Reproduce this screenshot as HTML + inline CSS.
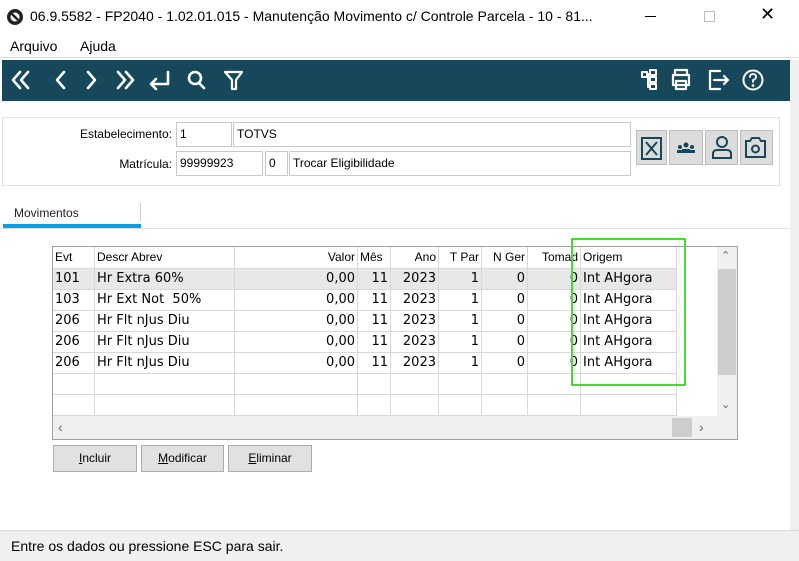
<!DOCTYPE html>
<html><head><meta charset="utf-8"><style>
*{box-sizing:border-box;margin:0;padding:0}
body{width:799px;height:561px;overflow:hidden;background:#fff;font-family:"Liberation Sans",sans-serif;position:relative;color:#000}
.a{position:absolute}
.inp{position:absolute;border:1px solid #c8c8c8;background:#fff;font-size:12px;padding:3px 3px;height:25px;line-height:17px}
.lbl{position:absolute;font-size:12px;text-align:right}
.ib{position:absolute;top:130px;height:35px;background:#dcdcdc;border:1px solid #bdbdbd}
.row{position:absolute;left:53px;width:624px;height:21px;border-bottom:1px solid #d8d8d8;font-size:13px;font-family:"DejaVu Sans",sans-serif}
.c{position:absolute;top:0;height:21px;line-height:20px;border-right:1px solid #d8d8d8;padding:0 2px;white-space:nowrap}
.r{text-align:right}
.h{font-family:"Liberation Sans",sans-serif;font-size:12px}
.btn{position:absolute;top:445px;height:27px;background:#e1e1e1;border:1px solid #adadad;font-size:12px;text-align:center;line-height:25px}
</style></head><body>
<svg class="a" style="left:6px;top:8px" width="18" height="18" viewBox="0 0 18 18"><circle cx="9" cy="9" r="8" fill="#222"/><circle cx="9" cy="9" r="4.5" fill="#fff"/><path d="M5 5 L12 12" stroke="#222" stroke-width="2.5"/></svg>
<div class="a" style="left:30px;top:8px;font-size:14px">06.9.5582 - FP2040 - 1.02.01.015 - Manutenção Movimento c/ Controle Parcela - 10 - 81...</div>
<div class="a" style="left:645px;top:16px;width:11px;height:1px;background:#000"></div>
<div class="a" style="left:704px;top:11px;width:11px;height:11px;border:1px solid #bbb"></div>
<div class="a" style="left:760px;top:4px;font-size:18px">✕</div>
<div class="a" style="left:10px;top:38px;font-size:14px">Arquivo</div>
<div class="a" style="left:80px;top:38px;font-size:14px">Ajuda</div>
<div class="a" style="left:0;top:57px;width:799px;height:1px;background:#ddd"></div>
<div class="a" style="left:2px;top:60px;width:788px;height:41px;background:#17475a"></div>
<svg class="a" style="left:8px;top:64px" width="780" height="32" fill="none" stroke="#fff" stroke-width="2.6" stroke-linecap="round" stroke-linejoin="round">
<path d="M12 8 L5 16 L12 24 M20 8 L13 16 L20 24"/>
<path d="M56 8 L49 16 L56 24"/>
<path d="M80 8 L87 16 L80 24"/>
<path d="M110 8 L117 16 L110 24 M118 8 L125 16 L118 24"/>
<path d="M160 8 V20 H144 M148 15 L143 20 L148 25"/>
<circle cx="187" cy="14" r="6"/><path d="M191 19 L196 24"/>
<path d="M217 8 H234 L228 16 V25 H224 V16 Z" stroke-width="2.2"/>
<g stroke-width="2"><rect x="634" y="8" width="5" height="5"/><rect x="642" y="6" width="6" height="5"/><rect x="642" y="13" width="6" height="5"/><rect x="642" y="20" width="6" height="5"/><path d="M639 10 H642 M640 10 V23 H642"/></g>
<path d="M667 11 V6 H679 V11 M665 11 H681 V21 H665 Z M668 17 H678 V25 H668 Z" stroke-width="2.2"/>
<path d="M712 7 H702 V25 H712 M706 16 H720 M716 12 L720 16 L716 20" stroke-width="2.2"/>
<circle cx="745" cy="16" r="9.5" stroke-width="2"/><path d="M742 13 Q742 10 745 10 Q748 10 748 13 Q748 15 745 16 V18" stroke-width="1.8"/><circle cx="745" cy="21.5" r=".6" stroke-width="1.5"/>
</svg>
<div class="a" style="left:790px;top:60px;width:9px;height:470px;background:#f0f0f0"></div>
<div class="a" style="left:2px;top:117px;width:778px;height:69px;border:1px solid #e2e2e2;background:#fff"></div>
<div class="lbl" style="left:20px;width:152px;top:127px">Estabelecimento:</div>
<div class="inp" style="left:176px;top:122px;width:56px">1</div>
<div class="inp" style="left:233px;top:122px;width:398px">TOTVS</div>
<div class="lbl" style="left:20px;width:152px;top:157px">Matrícula:</div>
<div class="inp" style="left:176px;top:151px;width:87px">99999923</div>
<div class="inp" style="left:265px;top:151px;width:23px">0</div>
<div class="inp" style="left:289px;top:151px;width:342px">Trocar Eligibilidade</div>
<div class="ib" style="left:636px;width:31px"></div>
<div class="ib" style="left:669px;width:34px"></div>
<div class="ib" style="left:705px;width:33px"></div>
<div class="ib" style="left:740px;width:33px"></div>
<svg class="a" style="left:636px;top:130px" width="138" height="35" fill="none" stroke="#17475a" stroke-width="2">
<rect x="6" y="8" width="19" height="21"/><path d="M10 12 L21 25 M21 12 L10 25"/>
<g fill="#17475a" stroke="none"><circle cx="50" cy="15" r="2.5"/><circle cx="44" cy="17" r="2"/><circle cx="56" cy="17" r="2"/><rect x="46" y="19" width="8" height="4"/><rect x="41" y="20" width="5" height="3"/><rect x="54" y="20" width="5" height="3"/></g>
<circle cx="86" cy="12" r="5"/><path d="M77 28 V24 Q77 20 81 20 H91 Q95 20 95 24 V28 Z"/>
<path d="M110 11 H114 L116 8 H123 L125 11 H129 V27 H110 Z"/><circle cx="119.5" cy="19" r="3.5"/>
</svg>
<div class="a" style="left:14px;top:206px;font-size:12px;color:#222">Movimentos</div>
<div class="a" style="left:140px;top:203px;width:1px;height:18px;background:#ccc"></div>
<div class="a" style="left:3px;top:224px;width:138px;height:4px;background:#0a9ee6"></div>
<div class="a" style="left:0;top:228px;width:790px;height:1px;background:#e0e0e0"></div>
<div class="a" style="left:52px;top:246px;width:686px;height:194px;border:1px solid #a0a0a0;background:#fff"></div>
<div class="a" style="left:717px;top:247px;width:20px;height:169px;background:#f0f0f0"></div>
<div class="a" style="left:718px;top:269px;width:18px;height:106px;background:#cdcdcd"></div>
<div class="a" style="left:721px;top:249px;font-size:11px;color:#666">⌃</div>
<div class="a" style="left:721px;top:398px;font-size:11px;color:#666">⌄</div>
<div class="a" style="left:53px;top:416px;width:684px;height:23px;background:#f0f0f0"></div>
<div class="a" style="left:672px;top:418px;width:20px;height:19px;background:#cdcdcd"></div>
<div class="a" style="left:58px;top:419px;font-size:14px;color:#666">‹</div>
<div class="a" style="left:699px;top:419px;font-size:14px;color:#666">›</div>

<div class="row h" style="top:247px;height:22px">
<div class="c" style="left:0;width:42px">Evt</div><div class="c" style="left:42px;width:140px">Descr Abrev</div><div class="c r" style="left:182px;width:123px">Valor</div><div class="c" style="left:305px;width:33px">Mês</div><div class="c r" style="left:338px;width:48px">Ano</div><div class="c r" style="left:386px;width:43px">T Par</div><div class="c r" style="left:429px;width:46px">N Ger</div><div class="c r" style="left:475px;width:53px">Tomad</div><div class="c" style="left:528px;width:96px">Origem</div></div>

<div class="row" style="top:269px;background:#e8e8e8"><div class="c" style="left:0;width:42px">101</div><div class="c" style="left:42px;width:140px">Hr Extra 60%</div><div class="c r" style="left:182px;width:123px">0,00</div><div class="c r" style="left:305px;width:33px">11</div><div class="c r" style="left:338px;width:48px">2023</div><div class="c r" style="left:386px;width:43px">1</div><div class="c r" style="left:429px;width:46px">0</div><div class="c r" style="left:475px;width:53px">0</div><div class="c" style="left:528px;width:96px">Int AHgora</div></div>
<div class="row" style="top:290px"><div class="c" style="left:0;width:42px">103</div><div class="c" style="left:42px;width:140px">Hr Ext Not&nbsp; 50%</div><div class="c r" style="left:182px;width:123px">0,00</div><div class="c r" style="left:305px;width:33px">11</div><div class="c r" style="left:338px;width:48px">2023</div><div class="c r" style="left:386px;width:43px">1</div><div class="c r" style="left:429px;width:46px">0</div><div class="c r" style="left:475px;width:53px">0</div><div class="c" style="left:528px;width:96px">Int AHgora</div></div>
<div class="row" style="top:311px"><div class="c" style="left:0;width:42px">206</div><div class="c" style="left:42px;width:140px">Hr Flt nJus Diu</div><div class="c r" style="left:182px;width:123px">0,00</div><div class="c r" style="left:305px;width:33px">11</div><div class="c r" style="left:338px;width:48px">2023</div><div class="c r" style="left:386px;width:43px">1</div><div class="c r" style="left:429px;width:46px">0</div><div class="c r" style="left:475px;width:53px">0</div><div class="c" style="left:528px;width:96px">Int AHgora</div></div>
<div class="row" style="top:332px"><div class="c" style="left:0;width:42px">206</div><div class="c" style="left:42px;width:140px">Hr Flt nJus Diu</div><div class="c r" style="left:182px;width:123px">0,00</div><div class="c r" style="left:305px;width:33px">11</div><div class="c r" style="left:338px;width:48px">2023</div><div class="c r" style="left:386px;width:43px">1</div><div class="c r" style="left:429px;width:46px">0</div><div class="c r" style="left:475px;width:53px">0</div><div class="c" style="left:528px;width:96px">Int AHgora</div></div>
<div class="row" style="top:353px"><div class="c" style="left:0;width:42px">206</div><div class="c" style="left:42px;width:140px">Hr Flt nJus Diu</div><div class="c r" style="left:182px;width:123px">0,00</div><div class="c r" style="left:305px;width:33px">11</div><div class="c r" style="left:338px;width:48px">2023</div><div class="c r" style="left:386px;width:43px">1</div><div class="c r" style="left:429px;width:46px">0</div><div class="c r" style="left:475px;width:53px">0</div><div class="c" style="left:528px;width:96px">Int AHgora</div></div>
<div class="row" style="top:374px"><div class="c" style="left:0;width:42px"></div><div class="c" style="left:42px;width:140px"></div><div class="c" style="left:182px;width:123px"></div><div class="c" style="left:305px;width:33px"></div><div class="c" style="left:338px;width:48px"></div><div class="c" style="left:386px;width:43px"></div><div class="c" style="left:429px;width:46px"></div><div class="c" style="left:475px;width:53px"></div><div class="c" style="left:528px;width:96px"></div></div>
<div class="row" style="top:395px"><div class="c" style="left:0;width:42px"></div><div class="c" style="left:42px;width:140px"></div><div class="c" style="left:182px;width:123px"></div><div class="c" style="left:305px;width:33px"></div><div class="c" style="left:338px;width:48px"></div><div class="c" style="left:386px;width:43px"></div><div class="c" style="left:429px;width:46px"></div><div class="c" style="left:475px;width:53px"></div><div class="c" style="left:528px;width:96px"></div></div>

<div class="a" style="left:571px;top:238px;width:115px;height:148px;border:2px solid #3fe02a"></div>

<div class="btn" style="left:53px;width:84px"><u>I</u>ncluir</div>
<div class="btn" style="left:141px;width:83px"><u>M</u>odificar</div>
<div class="btn" style="left:228px;width:84px"><u>E</u>liminar</div>

<div class="a" style="left:0;top:530px;width:799px;height:31px;background:#f0f0f0;border-top:1px solid #d8d8d8"></div>
<div class="a" style="left:11px;top:538px;font-size:14px">Entre os dados ou pressione ESC para sair.</div>
</body></html>
